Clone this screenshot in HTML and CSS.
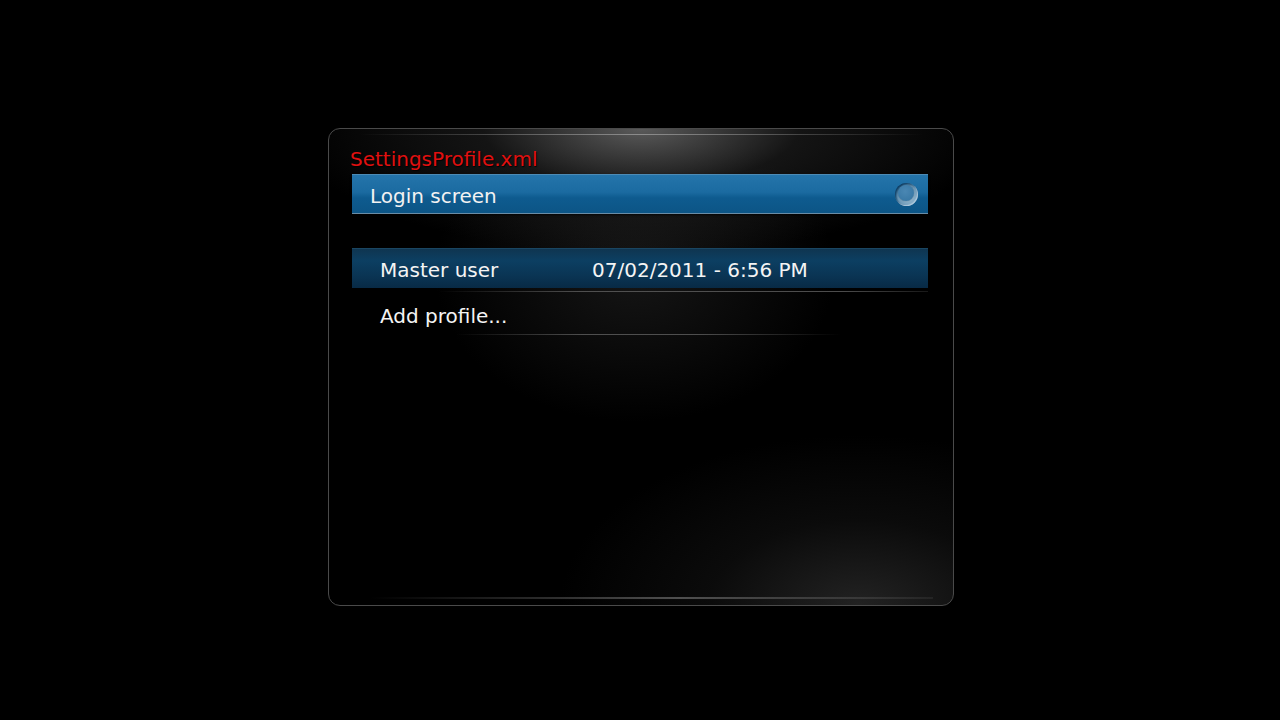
FILE: index.html
```html
<!DOCTYPE html>
<html>
<head>
<meta charset="utf-8">
<link rel="stylesheet" href="styles.css">
</head>
<body>
<div class="stage">
  <div class="panel">
    <div class="top-line"></div>
    <div class="title">SettingsProfile.xml</div>
    <div class="toggle-bar">
      <span class="toggle-label">Login screen</span>
      <span class="radio"><span class="radio-dot"></span></span>
    </div>
    <div class="list">
      <div class="row selected">
        <span class="name">Master user</span>
        <span class="date">07/02/2011 - 6:56 PM</span>
      </div>
      <div class="sep sep-wide"></div>
      <div class="row plain">
        <span class="name">Add profile...</span>
      </div>
      <div class="sep sep-narrow"></div>
    </div>
    <div class="bottom-line"></div>
  </div>
</div>
</body>
</html>
```
FILE: styles.css
```css
html, body {
  margin: 0;
  padding: 0;
  background: #000;
  width: 1280px;
  height: 720px;
  overflow: hidden;
  font-family: "DejaVu Sans", "Liberation Sans", sans-serif;
}
.stage {
  padding: 128px 0 0 328px;
}
.panel {
  position: relative;
  width: 626px;
  height: 478px;
  box-sizing: border-box;
  border: 1px solid #4a4a4a;
  border-radius: 12px;
  background:
    radial-gradient(ellipse 350px 125px at 50% 0%, rgba(105,105,105,0.85) 0%, rgba(45,45,45,0.45) 45%, rgba(0,0,0,0) 100%),
    radial-gradient(ellipse 300px 170px at 85% 100%, rgba(38,38,38,0.9) 0%, rgba(18,18,18,0.6) 50%, rgba(0,0,0,0) 100%),
    radial-gradient(ellipse 200px 150px at 49% 30%, rgba(24,24,24,0.9) 0%, rgba(0,0,0,0) 100%),
    #000;
  padding: 0 25px 0 23px;
  display: flex;
  flex-direction: column;
}
.top-line {
  position: absolute;
  left: 30px;
  right: 30px;
  top: 5px;
  height: 1px;
  background: linear-gradient(to right, rgba(120,120,120,0), rgba(150,150,150,0.85) 50%, rgba(120,120,120,0));
}
.bottom-line {
  position: absolute;
  left: 40px;
  right: 20px;
  bottom: 6px;
  height: 2px;
  background: linear-gradient(to right, rgba(90,90,90,0), rgba(110,110,110,0.7) 55%, rgba(90,90,90,0.2));
}
.title {
  margin-top: 18px;
  height: 27px;
  line-height: 24px;
  font-size: 20px;
  color: #e01010;
  margin-left: -2px;
  text-shadow: 1px 1px 1px rgba(0,0,0,0.9);
}
.toggle-bar {
  height: 40px;
  box-sizing: border-box;
  border-top: 1px solid #4d8bb5;
  border-bottom: 1px solid #6a8ca5;
  background: linear-gradient(to bottom, #2474aa 0%, #1b6ba1 45%, #0e5b8f 60%, #0c5586 100%);
  display: flex;
  align-items: center;
  justify-content: space-between;
  padding: 4px 10px 0 18px;
  box-shadow: 0 1px 2px rgba(0,0,0,0.8);
}
.toggle-label {
  font-size: 20px;
  color: #f2f2f2;
}
.radio {
  width: 23px;
  height: 23px;
  border-radius: 50%;
  box-sizing: border-box;
  background: radial-gradient(circle at 62% 62%, #9bbcd2 0%, #6a97b6 55%, #1c5e8c 75%);
  display: flex;
  align-items: center;
  justify-content: center;
  box-shadow: inset -1px -1px 1px rgba(200,220,235,0.7), inset 1px 1px 2px rgba(0,30,60,0.6);
  margin-top: -4px;
}
.radio-dot {
  width: 16px;
  height: 16px;
  border-radius: 50%;
  margin: -2px 0 0 -2px;
  background: radial-gradient(circle at 45% 40%, #4a87b3 0%, #3a79a6 70%, #2a6694 100%);
  box-shadow: 0 0 1px rgba(0,0,0,0.5);
}
.list {
  margin-top: 34px;
  display: flex;
  flex-direction: column;
}
.row {
  height: 40px;
  display: flex;
  align-items: center;
  padding-left: 28px;
  padding-top: 2px;
  box-sizing: border-box;
  font-size: 20px;
  color: #f4f4f4;
}
.row.selected {
  background: linear-gradient(to bottom, #0f3550 0%, #0c3f62 30%, #0a3453 70%, #082a45 100%);
  border-top: 1px solid #1a4662;
}
.row.plain {
  height: 40px;
  padding-top: 8px;
}
.name {
  width: 212px;
}
.sep {
  height: 1px;
}
.sep-wide {
  margin: 3px 0 0 0;
  background: linear-gradient(to right, rgba(80,80,80,0) 15%, rgba(95,95,95,0.8) 40%, rgba(95,95,95,0.8) 85%, rgba(80,80,80,0.3) 100%);
}
.sep-narrow {
  margin: 2px 0 0 0;
  background: linear-gradient(to right, rgba(80,80,80,0) 18%, rgba(95,95,95,0.8) 40%, rgba(95,95,95,0.8) 60%, rgba(80,80,80,0) 85%);
}
```
